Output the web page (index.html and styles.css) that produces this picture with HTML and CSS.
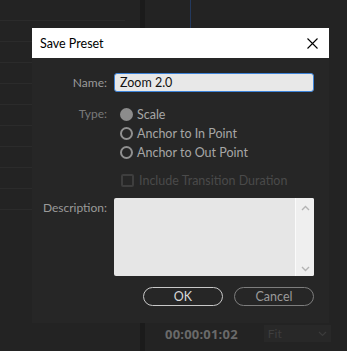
FILE: index.html
```html
<!DOCTYPE html>
<html lang="en">
<head>
  <meta charset="UTF-8">
  <title>Save Preset</title>
  <link rel="stylesheet" href="styles.css">
</head>
<body>
  <div class="app">
    <div class="left-panel">
      <div class="row"></div><div class="row"></div><div class="row"></div>
      <div class="row"></div><div class="row"></div><div class="row"></div>
      <div class="row"></div><div class="row"></div><div class="row"></div>
      <div class="row"></div>
    </div>
    <div class="divider"></div>
    <div class="monitor">
      <div class="playhead"></div>
      <div class="monitor-bar">
        <span class="timecode">00:00:01:02</span>
        <span class="fit">Fit <svg width="9" height="6" viewBox="0 0 9 6"><path d="M1 1l3.5 3.5L8 1" fill="none" stroke="#3c3c3c" stroke-width="1.2"/></svg></span>
      </div>
    </div>
  </div>

  <div class="dialog">
    <div class="titlebar">
      <span>Save Preset</span>
      <svg class="close" width="11" height="11" viewBox="0 0 11 11"><path d="M0.5 0.5l10 10M10.5 0.5l-10 10" stroke="#000" stroke-width="1.1"/></svg>
    </div>
    <div class="dialog-body">
      <div class="form">
        <label class="lbl lbl-name">Name:</label>
        <div class="name-input">Zoom 2.0</div>

        <label class="lbl lbl-type">Type:</label>
        <div class="radios">
          <div class="radio"><span class="dot filled"></span>Scale</div>
          <div class="radio"><span class="dot"></span>Anchor to In Point</div>
          <div class="radio"><span class="dot"></span>Anchor to Out Point</div>
        </div>

        <span></span>
        <div class="check"><span class="box"></span>Include Transition Duration</div>

        <label class="lbl lbl-desc">Description:</label>
        <div class="desc">
          <div class="desc-text"></div>
          <div class="scroll">
            <svg width="9" height="6" viewBox="0 0 9 6"><path d="M1 5l3.5-3.5L8 5" fill="none" stroke="#b4b4b4" stroke-width="1.4"/></svg>
            <svg width="9" height="6" viewBox="0 0 9 6"><path d="M1 1l3.5 3.5L8 1" fill="none" stroke="#b4b4b4" stroke-width="1.4"/></svg>
          </div>
        </div>
      </div>
      <div class="buttons">
        <button class="btn btn-ok">OK</button>
        <button class="btn btn-cancel">Cancel</button>
      </div>
    </div>
  </div>
</body>
</html>
```

FILE: styles.css
```css
/* Page */
html, body {
  margin: 0;
  padding: 0;
  background: #232323;
  font-family: Lato, "Open Sans", sans-serif;
  overflow: hidden;
}

/* Background application */
.app {
  display: flex;
  height: 351px;
}
.left-panel {
  width: 125px;
  margin-right: 15px;
}
.row {
  height: 20px;
  border-bottom: 1px solid #2b2b2b;
}
.divider {
  width: 5px;
  background: #1b1b1b;
}
.monitor {
  flex: 1;
  display: flex;
  flex-direction: column;
  justify-content: space-between;
}
.playhead {
  width: 1px;
  height: 40px;
  margin-left: 45px;
  background: #23395e;
}
.monitor-bar {
  display: flex;
  align-items: center;
  height: 17px;
  margin-bottom: 9px;
  padding-left: 20px;
}
.timecode {
  font-family: "Open Sans", sans-serif;
  font-size: 13px;
  font-weight: bold;
  color: #6a6a6a;
  letter-spacing: 0.2px;
}
.fit {
  display: flex;
  align-items: center;
  justify-content: space-between;
  width: 67px;
  height: 17px;
  margin-left: 26px;
  padding: 0 4px 0 4px;
  box-sizing: border-box;
  background: #282828;
  color: #3e3e3e;
  font-size: 12px;
}

/* Dialog */
.dialog {
  position: absolute;
  left: 32px;
  top: 28px;
  width: 297px;
  height: 295px;
  background: #262626;
  display: flex;
  flex-direction: column;
}
.titlebar {
  height: 30px;
  background: #fff;
  display: flex;
  align-items: center;
  justify-content: space-between;
  padding: 0 11px 0 8px;
  font-size: 12.5px;
  color: #000;
}
.dialog-body {
  padding: 15px 15px 0 0;
}
.form {
  display: grid;
  grid-template-columns: 75px 1fr;
  column-gap: 7px;
  font-size: 12px;
}
.lbl {
  text-align: right;
  color: #9a9a9a;
}
.lbl-name {
  line-height: 19px;
}
.lbl-type {
  padding-top: 12px;
  line-height: 19px;
  color: #7a7a7a;
}
.lbl-desc {
  line-height: 19px;
  margin-top: 8px;
}
.name-input {
  height: 19px;
  box-sizing: border-box;
  border: 1px solid #3d83d8;
  border-radius: 3px;
  background: #e8e8e8;
  color: #111;
  padding-left: 5px;
  line-height: 17px;
  font-size: 12.5px;
}
.radios {
  padding-top: 13px;
}
.radio {
  display: flex;
  align-items: center;
  height: 19px;
  color: #a6a6a6;
  font-size: 12.5px;
  margin-left: 6px;
}
.dot {
  width: 13px;
  height: 13px;
  box-sizing: border-box;
  border: 2px solid #909090;
  border-radius: 50%;
  margin-right: 4px;
}
.dot.filled {
  background: #8c8c8c;
  border-color: #8c8c8c;
}
.check {
  display: flex;
  align-items: center;
  height: 19px;
  margin-top: 9px;
  margin-left: 7px;
  color: #4a4a4a;
  font-size: 12.5px;
}
.box {
  width: 13px;
  height: 13px;
  box-sizing: border-box;
  border: 2px solid #3e3e3e;
  border-radius: 2px;
  margin-right: 5px;
}
.desc {
  display: flex;
  height: 78px;
  margin-top: 8px;
  border-radius: 2px;
  overflow: hidden;
  background: #e6e6e6;
}
.desc-text {
  flex: 1;
}
.scroll {
  width: 18px;
  border-left: 1px solid #fafafa;
  background: #efefef;
  display: flex;
  flex-direction: column;
  align-items: center;
  justify-content: space-between;
  padding: 7px 0 4px 0;
}
.buttons {
  display: flex;
  justify-content: flex-end;
  gap: 11px;
  margin-top: 11px;
}
.btn {
  width: 80px;
  height: 19px;
  border-radius: 10px;
  background: transparent;
  font-family: Lato, sans-serif;
  font-size: 12.5px;
  padding: 0;
}
.btn-ok {
  border: 1px solid #c8c8c8;
  color: #d8d8d8;
}
.btn-cancel {
  border: 1px solid #7d7d7d;
  color: #9a9a9a;
}
```
